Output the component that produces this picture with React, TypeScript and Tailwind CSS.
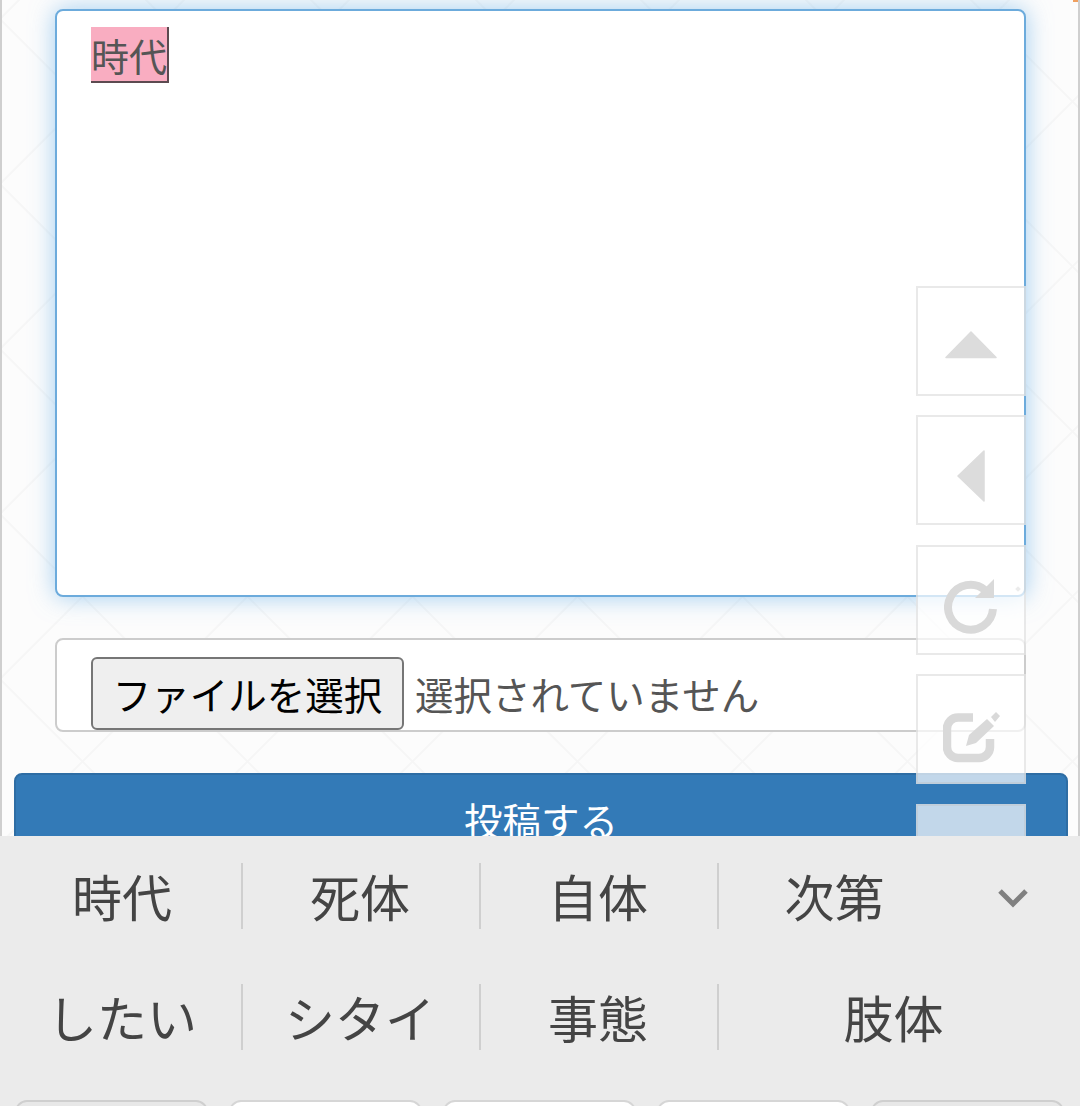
import React from 'react';

const jp = 'font-["Noto_Sans_CJK_JP","Noto_Sans",sans-serif]';

// Faint diamond lattice behind the form
function Lattice() {
  return (
    <svg className="absolute inset-0 h-full w-full" aria-hidden="true">
      <defs>
        <pattern id="lattice" x="-2" y="19" width="165" height="165" patternUnits="userSpaceOnUse">
          <path d="M0 0L165 165M165 0L0 165" stroke="#f6f6f6" strokeWidth="2" fill="none" />
        </pattern>
      </defs>
      <rect width="100%" height="100%" fill="url(#lattice)" />
    </svg>
  );
}

function FloatButton({ children }: { children?: React.ReactNode }) {
  return (
    <div className="flex h-[110px] w-[110px] items-center justify-center border-2 border-[#e4e4e4]/80 bg-white/70 bg-clip-padding">
      {children}
    </div>
  );
}

function FloatingNav() {
  return (
    <div className="absolute left-[916px] top-[286px] flex flex-col gap-[19.4px]">
      <FloatButton>
        <svg width="52" height="28" viewBox="0 0 52 28" className="mt-[8px]">
          <path d="M26 1L51 26.500H1Z" fill="#dcdcdc" stroke="#dcdcdc" strokeWidth="1.500" strokeLinejoin="round" />
        </svg>
      </FloatButton>
      <FloatButton>
        <svg width="28" height="52" viewBox="0 0 28 52" className="mt-[12px]">
          <path d="M27 1V51L1 26Z" fill="#dcdcdc" stroke="#dcdcdc" strokeWidth="1.500" strokeLinejoin="round" />
        </svg>
      </FloatButton>
      <FloatButton>
        <svg width="56" height="56" viewBox="0 0 56 56" className="ml-[2px] mt-[14px]">
          <path d="M49 30A22.500 22.500 0 1 1 41 11" fill="none" stroke="#d9d9d9" strokeWidth="8" />
          <path d="M50 0V19H31Z" fill="#d9d9d9" />
        </svg>
      </FloatButton>
      <FloatButton>
        <svg width="58" height="54" viewBox="0 0 58 54" className="ml-[1px] mt-[17px]">
          <path d="M30 6.500H15A11 11 0 0 0 4 17.500V36A11 11 0 0 0 15 47H36A11 11 0 0 0 47 36V28" fill="none" stroke="#d9d9d9" strokeWidth="8.500" />
          <path d="M23 35L26 24L44 8L51 15L33 32Z" fill="#d9d9d9" />
          <path d="M48 6L53 1L57 5L52 11Z" fill="#d9d9d9" />
        </svg>
      </FloatButton>
      <FloatButton />
    </div>
  );
}

function Divider() {
  return <div className="h-[66px] w-[2px] shrink-0 bg-[#cfcfcf]" />;
}

function Candidate({ text, className = '' }: { text: string; className?: string }) {
  return <div className={`flex h-[66px] items-center justify-center pb-[3px] text-[50px] leading-none text-[#444] ${className}`}>{text}</div>;
}

export default function App() {
  return (
    <div className={`relative h-[1106px] w-[1080px] overflow-hidden bg-[#ebebeb] ${jp}`}>
      <div className="relative h-[836px] overflow-hidden border-x-2 border-[#cfcfcf] bg-[#fcfcfc]">
        <Lattice />
        <div className="relative flex flex-col">
          <div className="relative ml-[53px] mt-[9px] h-[588px] w-[971px] rounded-lg border-2 border-[#6cabdc] bg-white pl-[34px] pt-4 shadow-[0_0_24px_rgba(102,175,233,0.6)]">
            <span className="inline-block h-[56px] w-[78px] whitespace-nowrap border-b-2 border-r-2 border-[#5c4a50] bg-[#f9adc1] text-[38px] leading-[56px] text-[#555]">時代</span>
            <div className="absolute bottom-[4px] right-[4px] h-[4px] w-[4px] rotate-45 bg-[#bdbdbd]" />
          </div>
          <div className="ml-[53px] mt-[41px] flex h-[94px] w-[971px] items-start rounded-lg border-2 border-[#ccc] bg-white pl-[34px] pt-[17px]">
            <div className="flex h-[73px] w-[313px] items-center justify-center rounded-md border-2 border-[#767676] bg-[#efefef] text-[38.5px] text-black">ファイルを選択</div>
            <span className="ml-[11px] mt-[6px] text-[38.5px] leading-[60px] text-[#555]">選択されていません</span>
          </div>
          <div className="ml-3 mt-[41px] flex h-[94px] w-[1054px] items-center justify-center rounded-lg border-2 border-[#2e6da4] bg-[#337ab7] text-[38.5px] text-white">投稿する</div>
        </div>
        <div className="absolute right-[-2px] top-0 h-[2px] w-[7px] bg-[#f0a060]" />
      </div>

      <FloatingNav />

      <div className="relative flex h-[270px] flex-col bg-[#ebebeb]">
        <div className="mt-[27px] flex items-center pl-[4px] pr-[12px]">
          <Candidate text="時代" className="w-[237px] pr-[1px]" />
          <Divider />
          <Candidate text="死体" className="w-[236px] pr-[2px]" />
          <Divider />
          <Candidate text="自体" className="w-[236px] pr-[2px]" />
          <Divider />
          <Candidate text="次第" className="w-[231px]" />
          <div className="flex flex-1 justify-center pl-[8px] pt-[4px]">
            <svg width="32" height="20" viewBox="0 0 32 20">
              <path d="M3 3L16 16L29 3" fill="none" stroke="#808080" strokeWidth="5" />
            </svg>
          </div>
        </div>
        <div className="mt-[55px] flex items-center pl-[4px] pr-[12px]">
          <Candidate text="したい" className="w-[237px] pr-[1px]" />
          <Divider />
          <Candidate text="シタイ" className="w-[236px] pr-[2px]" />
          <Divider />
          <Candidate text="事態" className="w-[236px] pr-[2px]" />
          <Divider />
          <Candidate text="肢体" className="flex-1" />
        </div>
        <div className="mt-[50px] flex gap-[21px] px-[15px]">
          <div className="h-[60px] w-[193px] shrink-0 rounded-xl border-2 border-[#cfcfcf] bg-[#e8e8e8]" />
          <div className="h-[60px] w-[193px] shrink-0 rounded-xl border-2 border-[#d6d6d6] bg-white" />
          <div className="h-[60px] w-[193px] shrink-0 rounded-xl border-2 border-[#d6d6d6] bg-white" />
          <div className="h-[60px] w-[193px] shrink-0 rounded-xl border-2 border-[#d6d6d6] bg-white" />
          <div className="h-[60px] w-[193px] shrink-0 rounded-xl border-2 border-[#cfcfcf] bg-[#e8e8e8]" />
        </div>
      </div>
    </div>
  );
}
